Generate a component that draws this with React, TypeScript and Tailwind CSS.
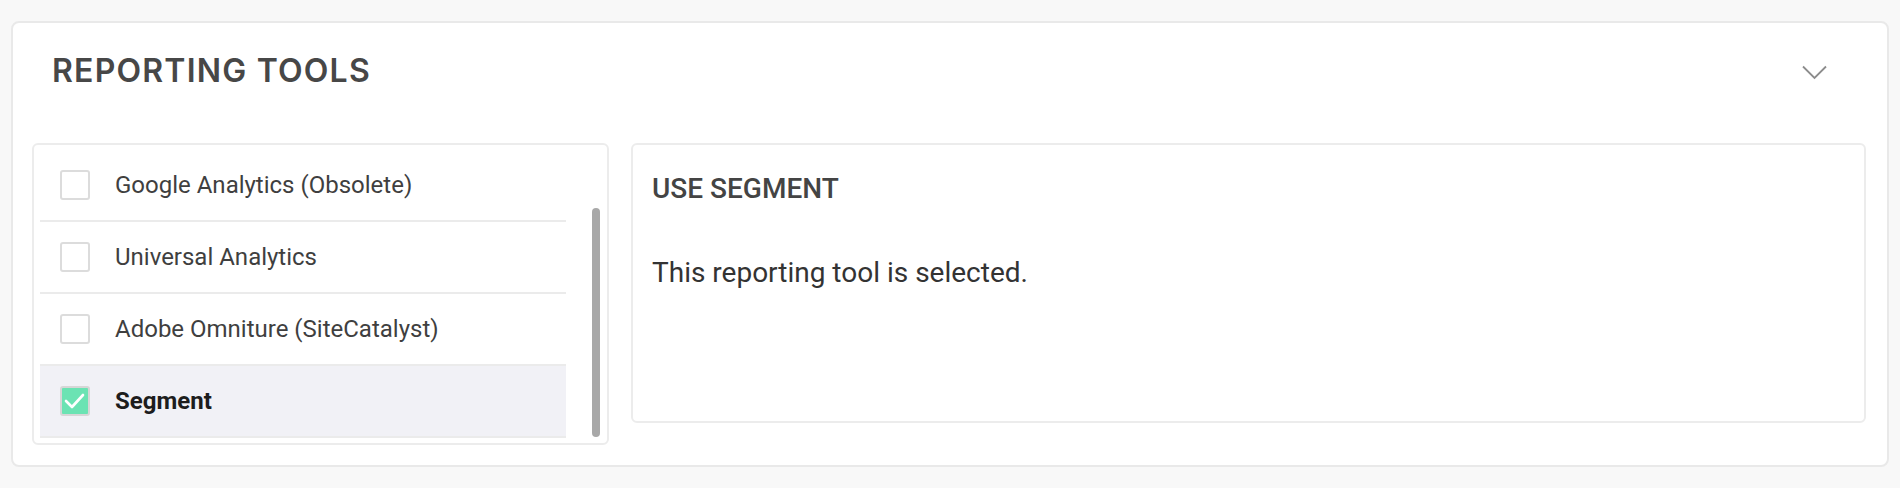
import React from "react";

const rows = [
  { label: "Google Analytics (Obsolete)", checked: false },
  { label: "Universal Analytics", checked: false },
  { label: "Adobe Omniture (SiteCatalyst)", checked: false },
  { label: "Segment", checked: true },
];

function Checkbox({ checked }: { checked: boolean }) {
  if (checked) {
    return (
      <div className="flex h-[30px] w-[30px] shrink-0 items-center justify-center rounded-[3px] border-2 border-[#d6d6d6] bg-[#6be3b3]">
        <svg width="26" height="26" viewBox="0 0 26 26" fill="none">
          <polyline points="4,13 10,19 21,7" stroke="#ffffff" strokeWidth="2.6" strokeLinecap="round" strokeLinejoin="round" />
        </svg>
      </div>
    );
  }
  return <div className="h-[30px] w-[30px] shrink-0 rounded-[3px] border-2 border-[#dcdcdc] bg-white" />;
}

export default function App() {
  return (
    <div className="min-h-screen bg-[#f8f8f8] px-[11px] pt-[21px] font-['Roboto',sans-serif]">
      <div className="rounded-[8px] border-2 border-[#e9e9e9] bg-white">
        <div className="flex items-center justify-between pl-[39px] pr-[60px] pt-[32px]">
          <h1 className="font-['Inter',sans-serif] text-[32px] font-semibold leading-[32px] tracking-[1.2px] text-[#474747]">
            REPORTING TOOLS
          </h1>
          <svg className="mt-[3px]" width="25" height="15" viewBox="0 0 25 15" fill="none">
            <polyline points="1,1.5 12.5,13 24,1.5" stroke="#8c8c8c" strokeWidth="1.8" />
          </svg>
        </div>
        <div className="flex items-start gap-[22px] pl-[19px] pr-[21px] pb-[20px] pt-[56px]">
          <div className="flex h-[302px] w-[577px] shrink-0 rounded-[6px] border-2 border-[#ececec] bg-white">
            <div className="ml-[6px] w-[526px] pt-[5px]">
              {rows.map((r) => (
                <div
                  key={r.label}
                  className={
                    r.checked
                      ? "flex h-[72px] items-center border-b-2 border-[#ebebeb] bg-[#f1f1f6] pl-[20px]"
                      : "flex h-[72px] items-center border-b-2 border-[#ebebeb] pl-[20px]"
                  }
                >
                  <Checkbox checked={r.checked} />
                  <span
                    className={
                      r.checked
                        ? "ml-[25px] text-[24px] font-bold leading-[24px] text-[#1d1d1d]"
                        : "ml-[25px] text-[24px] leading-[24px] text-[#3f3f3f]"
                    }
                  >
                    {r.label}
                  </span>
                </div>
              ))}
            </div>
            <div className="ml-auto mr-[7px] w-[8px]">
              <div className="mt-[63px] h-[229px] w-[8px] rounded-full bg-[#a8a8a8]" />
            </div>
          </div>
          <div className="h-[280px] flex-1 rounded-[6px] border-2 border-[#ececec] bg-white px-[19px] pt-[30px]">
            <h2 className="text-[28px] font-medium leading-[28px] text-[#444444]">USE SEGMENT</h2>
            <p className="mt-[56px] text-[28px] leading-[28px] text-[#333333]">This reporting tool is selected.</p>
          </div>
        </div>
      </div>
    </div>
  );
}
